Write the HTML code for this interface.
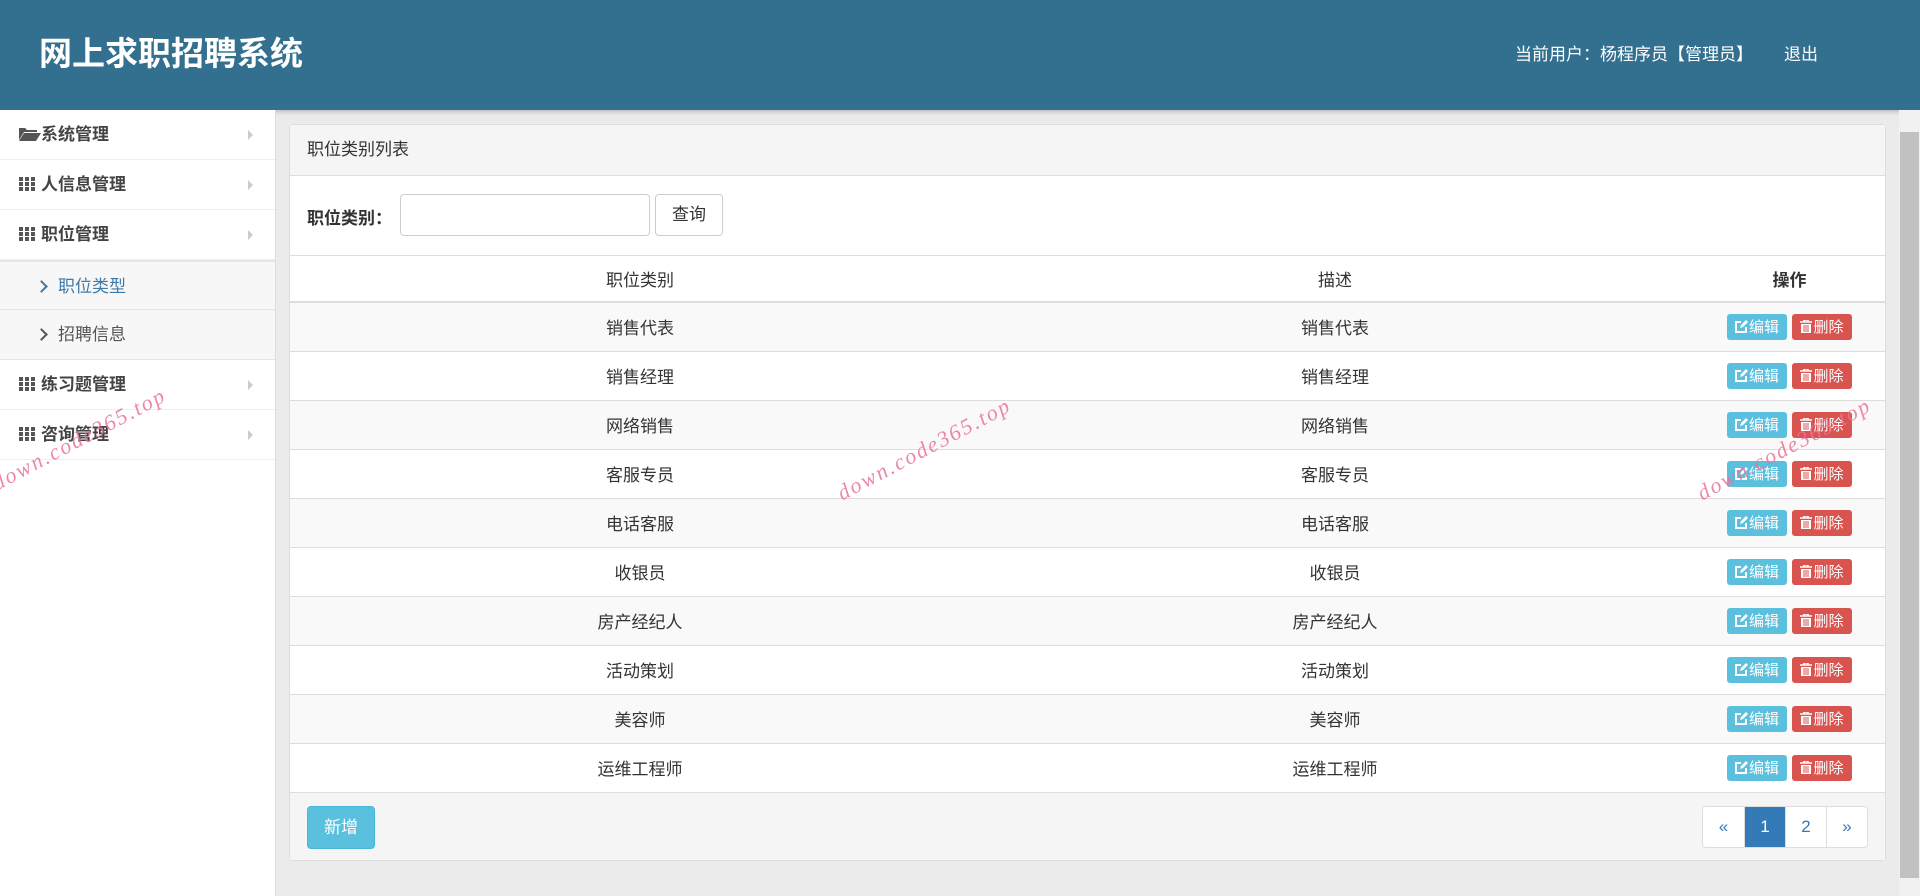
<!DOCTYPE html>
<html><head><meta charset="utf-8"><style>
*{box-sizing:border-box;margin:0;padding:0}
body{width:1920px;height:896px;overflow:hidden;background:#ebebeb;font-family:"Liberation Sans","Noto Sans CJK SC",sans-serif;color:#333;position:relative}
.hd{position:absolute;left:0;top:0;width:1920px;height:110px;background:#336f8e;color:#fff;box-shadow:0 2px 4px rgba(0,0,0,.2)}
.hd h1{position:absolute;left:39px;top:34px;font-size:33px;font-weight:bold;line-height:40px}
.hd .u{position:absolute;left:1515px;top:43px;font-size:17px;line-height:24px}
.hd .q{position:absolute;left:1784px;top:43px;font-size:17px;line-height:24px}
.sb{position:absolute;left:0;top:110px;width:276px;height:786px;background:#fff;border-right:1px solid #ddd}
.mi{height:50px;border-bottom:1px solid #eee;position:relative;font-size:17px;font-weight:bold;color:#444;line-height:50px;padding-left:19px}
.mi .ar{position:absolute;right:22px;top:20px;width:0;height:0;border-left:5px solid #ccc;border-top:5px solid transparent;border-bottom:5px solid transparent}
.sub{height:50px;line-height:50px;font-size:17px;color:#555;padding-left:37px;background:#f7f7f7;border-bottom:1px solid #e5e5e5;position:relative}
.sub.a{color:#3e7aa6;border-top:2px solid #e5e5e5}
.sub .ch{display:inline-block;width:9px;height:9px;border-right:2px solid currentColor;border-top:2px solid currentColor;transform:rotate(45deg);margin-right:12px;vertical-align:1px}
.pn{position:absolute;left:289px;top:124px;width:1597px;height:737px;background:#fff;border:1px solid #ddd;border-radius:4px}
.ph{height:51px;background:#f5f5f5;border-bottom:1px solid #ddd;font-size:17px;line-height:50px;padding-left:17px;color:#333}
.sr{height:80px;position:relative;border-bottom:1px solid #ddd}
.sr .l{position:absolute;left:17px;top:28px;font-size:17px;font-weight:bold}
.sr .i{position:absolute;left:110px;top:18px;width:250px;height:42px;border:1px solid #ccc;border-radius:4px}
.sr .b{position:absolute;left:365px;top:18px;width:68px;height:42px;border:1px solid #ccc;border-radius:4px;font-size:17px;line-height:40px;text-align:center}
table{width:100%;border-collapse:collapse;font-size:17px}
th,td{text-align:center;font-weight:normal;border-top:1px solid #ddd}
th{height:46px;border-top:none;border-bottom:2px solid #ddd}
th.o{font-weight:bold}
td{height:49px}
td.op{padding-left:14px}
tbody tr:nth-child(odd){background:#f9f9f9}
.be,.bd{display:inline-flex;align-items:center;justify-content:center;width:60px;height:26px;border-radius:3px;color:#fff;font-size:15px;vertical-align:middle}
.be{background:#5bc0de;margin-right:5px}.bd{background:#d9534f}
.be svg,.bd svg{margin-right:1px}
.ft{position:absolute;left:0;bottom:0;width:100%;height:68px;background:#f5f5f5;border-top:1px solid #ddd}
.add{position:absolute;left:17px;top:13px;width:68px;height:43px;background:#5bc0de;border:1px solid #46b8da;border-radius:4px;color:#fff;font-size:17px;line-height:41px;text-align:center}
.pg{position:absolute;left:1412px;top:13px;display:flex;height:42px;border:1px solid #ddd;border-radius:4px;overflow:hidden;background:#fff}
.pg span{width:41px;text-align:center;line-height:40px;font-size:17px;color:#337ab7;border-left:1px solid #ddd}
.pg span:first-child{border-left:none}
.pg .c{background:#337ab7;color:#fff}
.scr{position:absolute;left:1899px;top:110px;width:21px;height:786px;background:#f1f1f1}
.th{position:absolute;left:1900px;top:132px;width:19px;height:746px;background:#c1c1c1}
.wm{position:absolute;color:#e8749a;font-family:"Liberation Serif",serif;font-style:italic;font-size:22px;transform:rotate(-28deg);transform-origin:left bottom;opacity:.85;letter-spacing:2px;white-space:nowrap}
</style></head><body>
<div class="hd"><h1>网上求职招聘系统</h1><div class="u">当前用户：杨程序员【管理员】</div><div class="q">退出</div></div>
<div class="sb">
<div class="mi"><svg width="22" height="15" viewBox="0 0 22 15" style="vertical-align:-1px"><path d="M0 2h6l2 2h10v2H5L0 14z" fill="#555"/><path d="M5 7h17l-5 8H0z" fill="#555"/></svg>系统管理<i class="ar"></i></div>
<div class="mi"><svg width="16" height="14" viewBox="0 0 16 14" style="margin-right:6px;vertical-align:-1px"><g fill="#555"><rect x="0" y="0" width="4" height="4"/><rect x="6" y="0" width="4" height="4"/><rect x="12" y="0" width="4" height="4"/><rect x="0" y="5" width="4" height="4"/><rect x="6" y="5" width="4" height="4"/><rect x="12" y="5" width="4" height="4"/><rect x="0" y="10" width="4" height="4"/><rect x="6" y="10" width="4" height="4"/><rect x="12" y="10" width="4" height="4"/></g></svg>人信息管理<i class="ar"></i></div>
<div class="mi"><svg width="16" height="14" viewBox="0 0 16 14" style="margin-right:6px;vertical-align:-1px"><g fill="#555"><rect x="0" y="0" width="4" height="4"/><rect x="6" y="0" width="4" height="4"/><rect x="12" y="0" width="4" height="4"/><rect x="0" y="5" width="4" height="4"/><rect x="6" y="5" width="4" height="4"/><rect x="12" y="5" width="4" height="4"/><rect x="0" y="10" width="4" height="4"/><rect x="6" y="10" width="4" height="4"/><rect x="12" y="10" width="4" height="4"/></g></svg>职位管理<i class="ar"></i></div>
<div class="sub a"><i class="ch"></i>职位类型</div>
<div class="sub"><i class="ch"></i>招聘信息</div>
<div class="mi"><svg width="16" height="14" viewBox="0 0 16 14" style="margin-right:6px;vertical-align:-1px"><g fill="#555"><rect x="0" y="0" width="4" height="4"/><rect x="6" y="0" width="4" height="4"/><rect x="12" y="0" width="4" height="4"/><rect x="0" y="5" width="4" height="4"/><rect x="6" y="5" width="4" height="4"/><rect x="12" y="5" width="4" height="4"/><rect x="0" y="10" width="4" height="4"/><rect x="6" y="10" width="4" height="4"/><rect x="12" y="10" width="4" height="4"/></g></svg>练习题管理<i class="ar"></i></div>
<div class="mi"><svg width="16" height="14" viewBox="0 0 16 14" style="margin-right:6px;vertical-align:-1px"><g fill="#555"><rect x="0" y="0" width="4" height="4"/><rect x="6" y="0" width="4" height="4"/><rect x="12" y="0" width="4" height="4"/><rect x="0" y="5" width="4" height="4"/><rect x="6" y="5" width="4" height="4"/><rect x="12" y="5" width="4" height="4"/><rect x="0" y="10" width="4" height="4"/><rect x="6" y="10" width="4" height="4"/><rect x="12" y="10" width="4" height="4"/></g></svg>咨询管理<i class="ar"></i></div>
</div>
<div class="pn">
<div class="ph">职位类别列表</div>
<div class="sr"><span class="l">职位类别：</span><div class="i"></div><div class="b">查询</div></div>
<table><thead><tr><th style="width:700px">职位类别</th><th style="width:690px">描述</th><th class="o" style="padding-left:14px">操作</th></tr></thead><tbody>
<tr><td>销售代表</td><td>销售代表</td><td class="op"><span class="be"><svg width="13" height="13" viewBox="0 0 13 13"><path d="M11 7v5H1V2h5" fill="none" stroke="#fff" stroke-width="2"/><path d="M5 8l1-3 5-5 2 2-5 5z" fill="#fff"/></svg>编辑</span><span class="bd"><svg width="12" height="13" viewBox="0 0 12 13"><path d="M0 2h12M4 2V0h4v2" stroke="#fff" stroke-width="1.6" fill="none"/><path d="M1 4h10v9H1z" fill="#fff"/><path d="M4 5v7M6 5v7M8 5v7" stroke="#d9534f" stroke-width="1"/></svg>删除</span></td></tr>
<tr><td>销售经理</td><td>销售经理</td><td class="op"><span class="be"><svg width="13" height="13" viewBox="0 0 13 13"><path d="M11 7v5H1V2h5" fill="none" stroke="#fff" stroke-width="2"/><path d="M5 8l1-3 5-5 2 2-5 5z" fill="#fff"/></svg>编辑</span><span class="bd"><svg width="12" height="13" viewBox="0 0 12 13"><path d="M0 2h12M4 2V0h4v2" stroke="#fff" stroke-width="1.6" fill="none"/><path d="M1 4h10v9H1z" fill="#fff"/><path d="M4 5v7M6 5v7M8 5v7" stroke="#d9534f" stroke-width="1"/></svg>删除</span></td></tr>
<tr><td>网络销售</td><td>网络销售</td><td class="op"><span class="be"><svg width="13" height="13" viewBox="0 0 13 13"><path d="M11 7v5H1V2h5" fill="none" stroke="#fff" stroke-width="2"/><path d="M5 8l1-3 5-5 2 2-5 5z" fill="#fff"/></svg>编辑</span><span class="bd"><svg width="12" height="13" viewBox="0 0 12 13"><path d="M0 2h12M4 2V0h4v2" stroke="#fff" stroke-width="1.6" fill="none"/><path d="M1 4h10v9H1z" fill="#fff"/><path d="M4 5v7M6 5v7M8 5v7" stroke="#d9534f" stroke-width="1"/></svg>删除</span></td></tr>
<tr><td>客服专员</td><td>客服专员</td><td class="op"><span class="be"><svg width="13" height="13" viewBox="0 0 13 13"><path d="M11 7v5H1V2h5" fill="none" stroke="#fff" stroke-width="2"/><path d="M5 8l1-3 5-5 2 2-5 5z" fill="#fff"/></svg>编辑</span><span class="bd"><svg width="12" height="13" viewBox="0 0 12 13"><path d="M0 2h12M4 2V0h4v2" stroke="#fff" stroke-width="1.6" fill="none"/><path d="M1 4h10v9H1z" fill="#fff"/><path d="M4 5v7M6 5v7M8 5v7" stroke="#d9534f" stroke-width="1"/></svg>删除</span></td></tr>
<tr><td>电话客服</td><td>电话客服</td><td class="op"><span class="be"><svg width="13" height="13" viewBox="0 0 13 13"><path d="M11 7v5H1V2h5" fill="none" stroke="#fff" stroke-width="2"/><path d="M5 8l1-3 5-5 2 2-5 5z" fill="#fff"/></svg>编辑</span><span class="bd"><svg width="12" height="13" viewBox="0 0 12 13"><path d="M0 2h12M4 2V0h4v2" stroke="#fff" stroke-width="1.6" fill="none"/><path d="M1 4h10v9H1z" fill="#fff"/><path d="M4 5v7M6 5v7M8 5v7" stroke="#d9534f" stroke-width="1"/></svg>删除</span></td></tr>
<tr><td>收银员</td><td>收银员</td><td class="op"><span class="be"><svg width="13" height="13" viewBox="0 0 13 13"><path d="M11 7v5H1V2h5" fill="none" stroke="#fff" stroke-width="2"/><path d="M5 8l1-3 5-5 2 2-5 5z" fill="#fff"/></svg>编辑</span><span class="bd"><svg width="12" height="13" viewBox="0 0 12 13"><path d="M0 2h12M4 2V0h4v2" stroke="#fff" stroke-width="1.6" fill="none"/><path d="M1 4h10v9H1z" fill="#fff"/><path d="M4 5v7M6 5v7M8 5v7" stroke="#d9534f" stroke-width="1"/></svg>删除</span></td></tr>
<tr><td>房产经纪人</td><td>房产经纪人</td><td class="op"><span class="be"><svg width="13" height="13" viewBox="0 0 13 13"><path d="M11 7v5H1V2h5" fill="none" stroke="#fff" stroke-width="2"/><path d="M5 8l1-3 5-5 2 2-5 5z" fill="#fff"/></svg>编辑</span><span class="bd"><svg width="12" height="13" viewBox="0 0 12 13"><path d="M0 2h12M4 2V0h4v2" stroke="#fff" stroke-width="1.6" fill="none"/><path d="M1 4h10v9H1z" fill="#fff"/><path d="M4 5v7M6 5v7M8 5v7" stroke="#d9534f" stroke-width="1"/></svg>删除</span></td></tr>
<tr><td>活动策划</td><td>活动策划</td><td class="op"><span class="be"><svg width="13" height="13" viewBox="0 0 13 13"><path d="M11 7v5H1V2h5" fill="none" stroke="#fff" stroke-width="2"/><path d="M5 8l1-3 5-5 2 2-5 5z" fill="#fff"/></svg>编辑</span><span class="bd"><svg width="12" height="13" viewBox="0 0 12 13"><path d="M0 2h12M4 2V0h4v2" stroke="#fff" stroke-width="1.6" fill="none"/><path d="M1 4h10v9H1z" fill="#fff"/><path d="M4 5v7M6 5v7M8 5v7" stroke="#d9534f" stroke-width="1"/></svg>删除</span></td></tr>
<tr><td>美容师</td><td>美容师</td><td class="op"><span class="be"><svg width="13" height="13" viewBox="0 0 13 13"><path d="M11 7v5H1V2h5" fill="none" stroke="#fff" stroke-width="2"/><path d="M5 8l1-3 5-5 2 2-5 5z" fill="#fff"/></svg>编辑</span><span class="bd"><svg width="12" height="13" viewBox="0 0 12 13"><path d="M0 2h12M4 2V0h4v2" stroke="#fff" stroke-width="1.6" fill="none"/><path d="M1 4h10v9H1z" fill="#fff"/><path d="M4 5v7M6 5v7M8 5v7" stroke="#d9534f" stroke-width="1"/></svg>删除</span></td></tr>
<tr><td>运维工程师</td><td>运维工程师</td><td class="op"><span class="be"><svg width="13" height="13" viewBox="0 0 13 13"><path d="M11 7v5H1V2h5" fill="none" stroke="#fff" stroke-width="2"/><path d="M5 8l1-3 5-5 2 2-5 5z" fill="#fff"/></svg>编辑</span><span class="bd"><svg width="12" height="13" viewBox="0 0 12 13"><path d="M0 2h12M4 2V0h4v2" stroke="#fff" stroke-width="1.6" fill="none"/><path d="M1 4h10v9H1z" fill="#fff"/><path d="M4 5v7M6 5v7M8 5v7" stroke="#d9534f" stroke-width="1"/></svg>删除</span></td></tr>
</tbody></table>
<div class="ft"><div class="add">新增</div><div class="pg"><span>«</span><span class="c">1</span><span>2</span><span>»</span></div></div>
</div>
<div class="scr"></div><div class="th"></div>
<div class="wm" style="left:0;top:470px">down.code365.top</div>
<div class="wm" style="left:845px;top:480px">down.code365.top</div>
<div class="wm" style="left:1705px;top:480px">down.code365.top</div>
</body></html>
